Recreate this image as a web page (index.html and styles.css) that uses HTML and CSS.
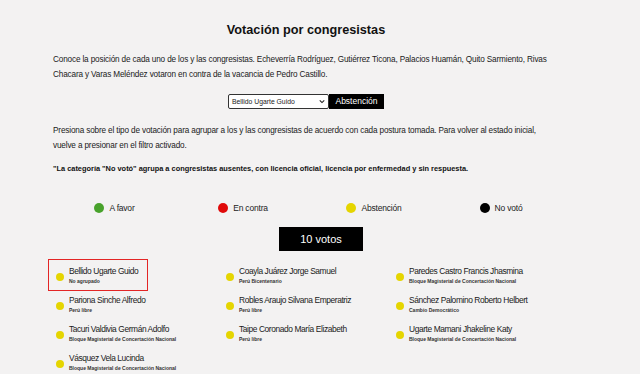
FILE: index.html
```html
<!DOCTYPE html>
<html lang="es">
<head>
<meta charset="utf-8">
<link rel="stylesheet" href="styles.css">
</head>
<body>
<main class="page">
  <h1 class="title">Votación por congresistas</h1>
  <p class="intro">Conoce la posición de cada uno de los y las congresistas. Echeverría Rodríguez, Gutiérrez Ticona, Palacios Huamán, Quito Sarmiento, Rivas Chacara y Varas Meléndez votaron en contra de la vacancia de Pedro Castillo.</p>
  <div class="picker">
    <div class="select"><span>Bellido Ugarte Guido</span><svg class="chev" viewBox="0 0 8 6" width="6" height="5"><path d="M1 1.5 L4 4.5 L7 1.5" fill="none" stroke="#222" stroke-width="1.4"/></svg></div>
    <div class="pick-result">Abstención</div>
  </div>
  <p class="intro intro-2">Presiona sobre el tipo de votación para agrupar a los y las congresistas de acuerdo con cada postura tomada. Para volver al estado inicial, vuelve a presionar en el filtro activado.</p>
  <p class="note">"La categoría "No votó" agrupa a congresistas ausentes, con licencia oficial, licencia por enfermedad y sin respuesta.</p>
</main>
<div class="legend">
  <div class="legend-item"><span class="dot dot-green"></span>A favor</div>
  <div class="legend-item"><span class="dot dot-red"></span>En contra</div>
  <div class="legend-item"><span class="dot dot-yellow"></span>Abstención</div>
  <div class="legend-item"><span class="dot dot-black"></span>No votó</div>
</div>
<div class="count-wrap"><div class="count">10 votos</div></div>
<div class="grid">
  <div class="cell"><div class="member selected"><span class="mdot"></span><div><div class="name">Bellido Ugarte Guido</div><div class="party">No agrupado</div></div></div></div>
  <div class="cell"><div class="member"><span class="mdot"></span><div><div class="name">Coayla Juárez Jorge Samuel</div><div class="party">Perú Bicentenario</div></div></div></div>
  <div class="cell"><div class="member"><span class="mdot"></span><div><div class="name">Paredes Castro Francis Jhasmina</div><div class="party">Bloque Magisterial de Concertación Nacional</div></div></div></div>
  <div class="cell"><div class="member"><span class="mdot"></span><div><div class="name">Pariona Sinche Alfredo</div><div class="party">Perú libre</div></div></div></div>
  <div class="cell"><div class="member"><span class="mdot"></span><div><div class="name">Robles Araujo Silvana Emperatriz</div><div class="party">Perú libre</div></div></div></div>
  <div class="cell"><div class="member"><span class="mdot"></span><div><div class="name">Sánchez Palomino Roberto Helbert</div><div class="party">Cambio Democrático</div></div></div></div>
  <div class="cell"><div class="member"><span class="mdot"></span><div><div class="name">Tacuri Valdivia Germán Adolfo</div><div class="party">Bloque Magisterial de Concertación Nacional</div></div></div></div>
  <div class="cell"><div class="member"><span class="mdot"></span><div><div class="name">Taipe Coronado María Elizabeth</div><div class="party">Perú libre</div></div></div></div>
  <div class="cell"><div class="member"><span class="mdot"></span><div><div class="name">Ugarte Mamani Jhakeline Katy</div><div class="party">Bloque Magisterial de Concertación Nacional</div></div></div></div>
  <div class="cell"><div class="member"><span class="mdot"></span><div><div class="name">Vásquez Vela Lucinda</div><div class="party">Bloque Magisterial de Concertación Nacional</div></div></div></div>
</div>
</body>
</html>
```
FILE: styles.css
```css
html, body {
  margin: 0;
  padding: 0;
}
body {
  background: #f3f2f2;
  font-family: "Liberation Sans", Arial, sans-serif;
  color: #111;
  width: 640px;
  height: 374px;
  overflow: hidden;
}
.page {
  width: 506px;
  margin-left: 53px;
  padding-top: 21px;
}
.title {
  margin: 0;
  font-size: 12.7px;
  line-height: 18px;
  font-weight: bold;
  text-align: center;
  color: #111;
}
.intro {
  margin: 13px 0 0;
  font-size: 8.2px;
  letter-spacing: -0.15px;
  line-height: 15px;
  color: #1a1a1a;
}
.picker {
  display: flex;
  justify-content: center;
  margin-top: 12px;
  height: 15px;
}
.select {
  width: 101px;
  height: 15px;
  box-sizing: border-box;
  background: #fff;
  border: 1px solid #333;
  border-radius: 2px;
  display: flex;
  align-items: center;
  justify-content: space-between;
  padding: 0 3px 0 3px;
  font-size: 6.8px;
  color: #222;
}
.pick-result {
  background: #000;
  color: #fff;
  width: 55px;
  height: 15px;
  font-size: 8.5px;
  line-height: 15px;
  text-align: center;
}
.intro-2 {
  margin-top: 14px;
}
.note {
  margin: 10px 0 0;
  font-size: 7.4px;
  font-weight: bold;
  line-height: 12px;
  color: #111;
}
.legend {
  display: grid;
  grid-template-columns: 127px 130px 132px 122px;
  margin: 26px 0 0 51px;
  height: 14px;
}
.legend-item {
  display: flex;
  align-items: center;
  justify-content: center;
  gap: 5px;
  font-size: 8.5px;
  letter-spacing: -0.2px;
  color: #222;
}
.dot {
  width: 10px;
  height: 10px;
  border-radius: 50%;
  display: inline-block;
}
.dot-green { background: #48a22c; }
.dot-red { background: #e00a0a; }
.dot-yellow { background: #e5d500; }
.dot-black { background: #000; }
.count-wrap {
  display: flex;
  justify-content: center;
  margin-top: 12px;
  padding-left: 2px;
}
.count {
  width: 84px;
  height: 24px;
  background: #000;
  color: #fff;
  font-size: 11px;
  line-height: 24px;
  text-align: center;
}
.grid {
  display: grid;
  grid-template-columns: repeat(3, 170px);
  margin: 10px 0 0 49px;
}
.cell {
  height: 29px;
}
.member {
  display: inline-flex;
  align-items: center;
  gap: 5px;
  padding: 6px 9px 5px 7px;
  box-sizing: border-box;
  margin-top: -1px;
}
.member.selected {
  outline: 1.5px solid #e32626;
}
.mdot {
  width: 8px;
  height: 8px;
  border-radius: 50%;
  background: #e5d500;
  flex: none;
  margin-top: 2px;
}
.name {
  font-size: 8.4px;
  letter-spacing: -0.4px;
  line-height: 11px;
  color: #1a1a1a;
}
.party {
  font-size: 5px;
  line-height: 8px;
  font-weight: bold;
  color: #333;
}
```
